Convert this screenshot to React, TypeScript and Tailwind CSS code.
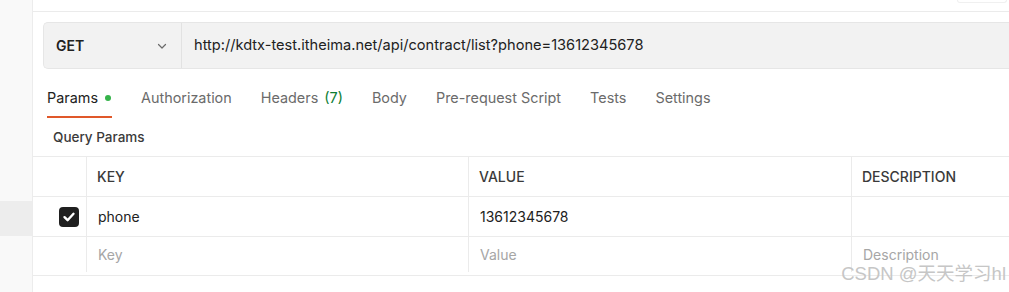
import React from "react";

const font = { fontFamily: "Inter, 'Noto Sans', sans-serif" };

const tabs = [
  { label: "Authorization" },
  { label: "Headers", count: "(7)" },
  { label: "Body" },
  { label: "Pre-request Script" },
  { label: "Tests" },
  { label: "Settings" },
];

function Check() {
  return (
    <div className="flex h-[20px] w-[20px] items-center justify-center rounded-[4px] bg-[#1f1f1f]">
      <svg width="14" height="14" viewBox="0 0 14 14" fill="none">
        <path d="M2.5 7.2 5.6 10.2 11.5 3.8" stroke="#fff" strokeWidth="2.4" strokeLinecap="round" strokeLinejoin="round" />
      </svg>
    </div>
  );
}

function Row({ a, b, c, muted, check }: { a: React.ReactNode; b: string; c: string; muted?: boolean; check?: boolean }) {
  const tone = muted ? "text-[#a6a6a6]" : "text-[#212121]";
  return (
    <div className={`grid h-[40px] grid-cols-[54px_382px_383px_1fr] border-b border-[#ebebeb] text-[14px] ${tone}`}>
      <div className="flex items-center justify-end border-r border-[#ebebeb] pr-[7px]">{check && <Check />}</div>
      <div className="flex items-center border-r border-[#ebebeb] pl-[11px]">{a}</div>
      <div className="flex items-center border-r border-[#ebebeb] pl-[11px]">{b}</div>
      <div className="flex items-center pl-[11px]">{c}</div>
    </div>
  );
}

export default function App() {
  return (
    <div className="relative flex h-[292px] w-[1009px] overflow-hidden bg-white" style={font}>
      {/* side strip */}
      <div className="w-[33px] shrink-0 border-r border-[#ececec] bg-[#f9f9f9] pt-[201px]">
        <div className="h-[35px] bg-[#ededed]" />
      </div>

      <div className="flex min-w-0 flex-1 flex-col">
        <div className="flex h-[12px] shrink-0 justify-end border-b border-[#ebebeb]">
          <div className="mr-[2px] h-[3px] w-[50px] rounded-b-[4px] border border-t-0 border-[#f0f0f0]" />
        </div>

        {/* method + url */}
        <div className="ml-[10px] mt-[10px] flex h-[47px] w-[1000px] rounded-l-[5px] border border-r-0 border-[#e6e6e6] bg-[#f2f2f2]">
          <div className="flex w-[138px] items-center justify-between border-r border-[#e2e2e2] pl-[12px] pr-[13px]">
            <span className="text-[14px] font-semibold text-[#212121]">GET</span>
            <svg width="12" height="12" viewBox="0 0 12 12" fill="none">
              <path d="M2.5 4.5 6 8 9.5 4.5" stroke="#6b6b6b" strokeWidth="1.2" strokeLinecap="round" strokeLinejoin="round" />
            </svg>
          </div>
          <div className="flex items-center pl-[12px] text-[14.6px] text-[#212121]">
            http://kdtx-test.itheima.net/api/contract/list?phone=13612345678
          </div>
        </div>

        {/* tabs */}
        <div className="mt-[11px] flex gap-[29px] pl-[14px] text-[14.4px] text-[#6b6b6b]">
          <div className="flex h-[38px] items-center gap-[7px] border-b-2 border-[#e0582a] text-[#212121]">
            Params
            <span className="mr-[1px] h-[6px] w-[6px] rounded-full bg-[#35b34a]" />
          </div>
          {tabs.map((t) => (
            <div key={t.label} className="flex h-[38px] items-center gap-[6px] border-b-2 border-transparent">
              {t.label}
              {t.count && <span className="text-[#0c7d33]">{t.count}</span>}
            </div>
          ))}
        </div>

        <div className="flex h-[38px] items-center pl-[20px] text-[13.5px] font-medium text-[#3a3a3a]">Query Params</div>

        {/* table */}
        <div className="border-t border-[#ebebeb]">
          <div className="grid h-[40px] grid-cols-[54px_382px_383px_1fr] border-b border-[#ebebeb] text-[14px] font-medium text-[#3a3a3a]">
            <div className="border-r border-[#ebebeb]" />
            <div className="flex items-center border-r border-[#ebebeb] pl-[10px]">KEY</div>
            <div className="flex items-center border-r border-[#ebebeb] pl-[10px]">VALUE</div>
            <div className="flex items-center pl-[10px]">DESCRIPTION</div>
          </div>
          <Row a="phone" b="13612345678" c="" check />
          <div className="grid h-[39px] grid-cols-[54px_382px_383px_1fr] border-b border-[#ebebeb] pb-[3px] text-[14px] text-[#a6a6a6]">
            <div className="border-r border-[#ebebeb]" />
            <div className="flex items-center border-r border-[#ebebeb] pl-[11px]">Key</div>
            <div className="flex items-center border-r border-[#ebebeb] pl-[11px]">Value</div>
            <div className="flex items-center pl-[11px]">Description</div>
          </div>
        </div>
      </div>

      <div
        className="absolute bottom-[7px] right-[3px] text-[18.5px] leading-[22px] text-[#c6c6c6]"
        style={{ fontFamily: "'Liberation Sans', 'Noto Sans CJK SC', sans-serif" }}
      >
        CSDN @天天学习hl
      </div>
    </div>
  );
}
